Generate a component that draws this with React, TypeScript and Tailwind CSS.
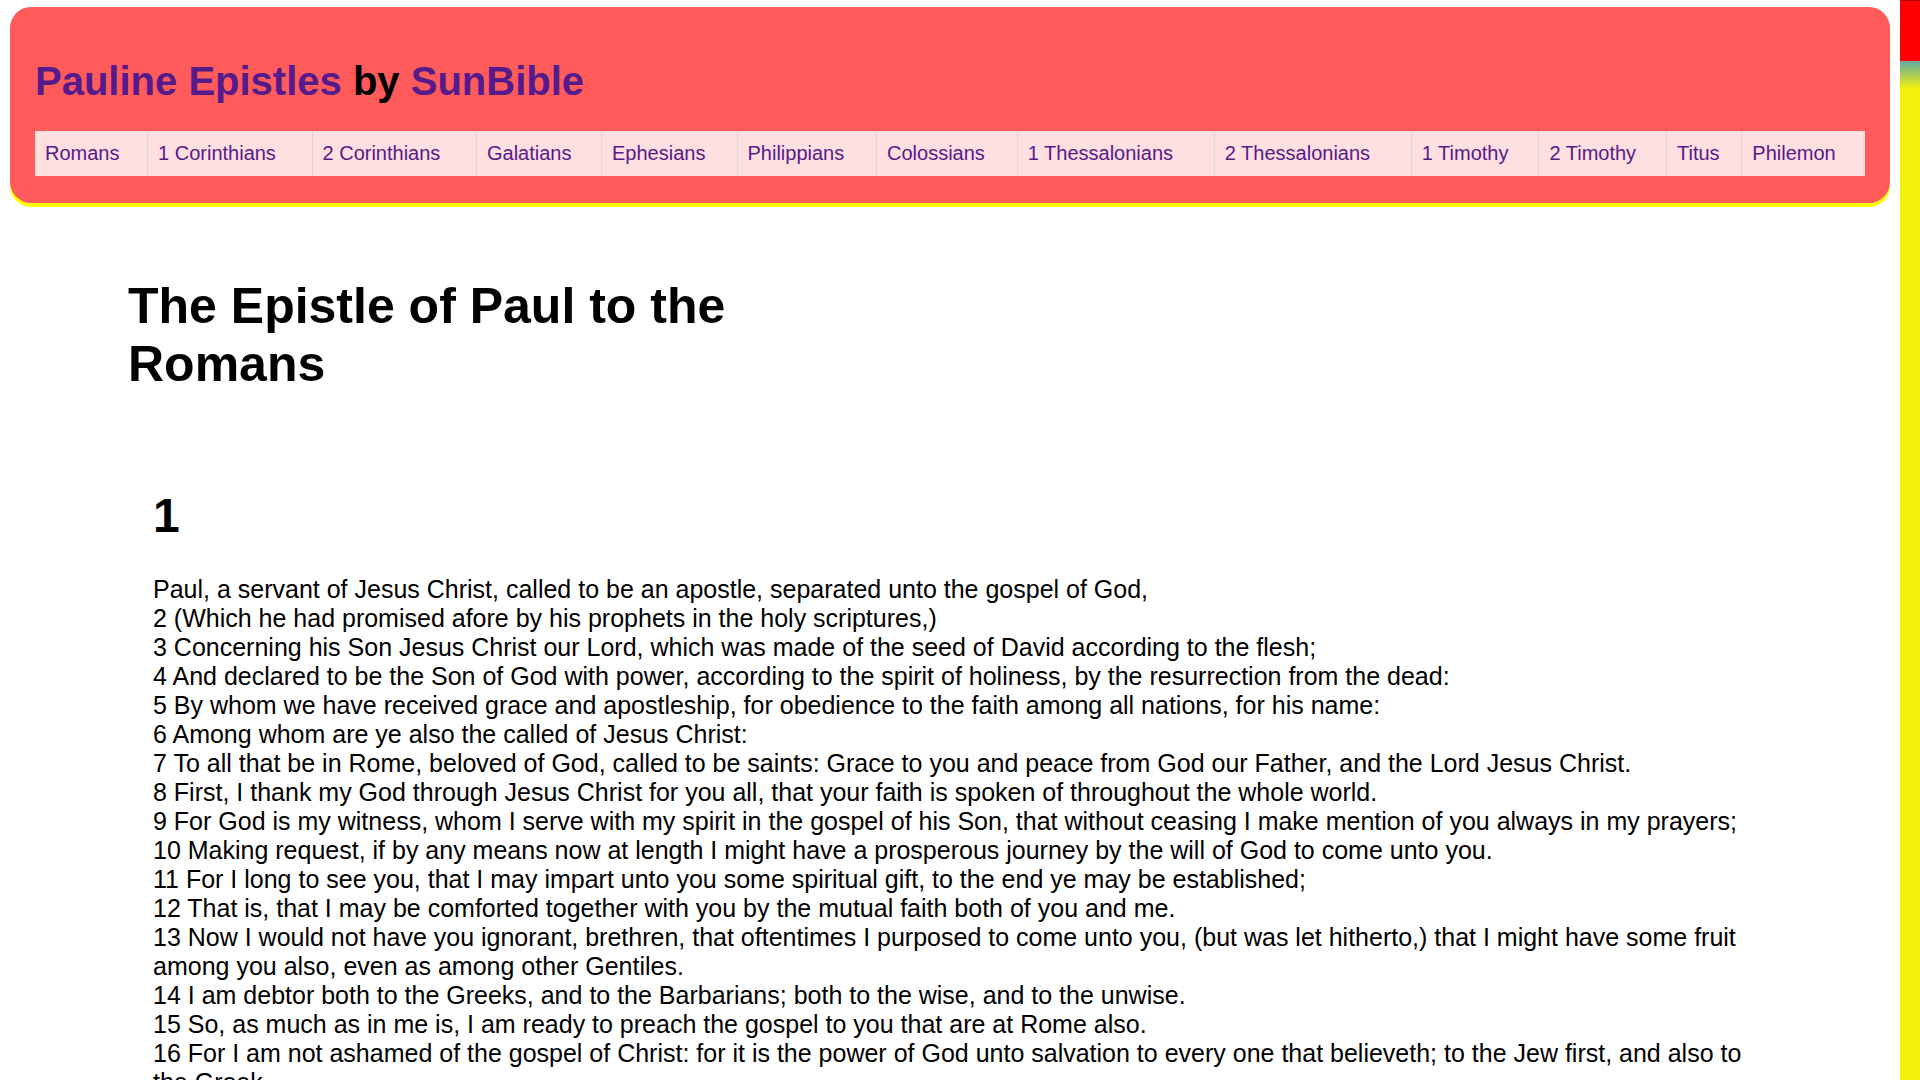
import React from "react";

const books = [
  "Romans",
  "1 Corinthians",
  "2 Corinthians",
  "Galatians",
  "Ephesians",
  "Philippians",
  "Colossians",
  "1 Thessalonians",
  "2 Thessalonians",
  "1 Timothy",
  "2 Timothy",
  "Titus",
  "Philemon",
];

const verses = [
  "Paul, a servant of Jesus Christ, called to be an apostle, separated unto the gospel of God,",
  "2 (Which he had promised afore by his prophets in the holy scriptures,)",
  "3 Concerning his Son Jesus Christ our Lord, which was made of the seed of David according to the flesh;",
  "4 And declared to be the Son of God with power, according to the spirit of holiness, by the resurrection from the dead:",
  "5 By whom we have received grace and apostleship, for obedience to the faith among all nations, for his name:",
  "6 Among whom are ye also the called of Jesus Christ:",
  "7 To all that be in Rome, beloved of God, called to be saints: Grace to you and peace from God our Father, and the Lord Jesus Christ.",
  "8 First, I thank my God through Jesus Christ for you all, that your faith is spoken of throughout the whole world.",
  "9 For God is my witness, whom I serve with my spirit in the gospel of his Son, that without ceasing I make mention of you always in my prayers;",
  "10 Making request, if by any means now at length I might have a prosperous journey by the will of God to come unto you.",
  "11 For I long to see you, that I may impart unto you some spiritual gift, to the end ye may be established;",
  "12 That is, that I may be comforted together with you by the mutual faith both of you and me.",
  "13 Now I would not have you ignorant, brethren, that oftentimes I purposed to come unto you, (but was let hitherto,) that I might have some fruit among you also, even as among other Gentiles.",
  "14 I am debtor both to the Greeks, and to the Barbarians; both to the wise, and to the unwise.",
  "15 So, as much as in me is, I am ready to preach the gospel to you that are at Rome also.",
  "16 For I am not ashamed of the gospel of Christ: for it is the power of God unto salvation to every one that believeth; to the Jew first, and also to the Greek.",
  "17 For therein is the righteousness of God revealed from faith to faith: as it is written, The just shall live by faith.",
  "18 For the wrath of God is revealed from heaven against all ungodliness and unrighteousness of men, who hold the truth in unrighteousness;",
  "19 Because that which may be known of God is manifest in them; for God hath shewed it unto them.",
  "20 For the invisible things of him from the creation of the world are clearly seen, being understood by the things that are made, even his eternal power and Godhead; so that they are without excuse:",
];

export default function App() {
  return (
    <div className="flex h-screen overflow-hidden bg-white font-['Liberation_Sans',Arial,sans-serif] text-black">
      <div className="min-w-0 flex-1 overflow-hidden pt-[7px]">
        <header className="mx-[10px] rounded-[21px] bg-[#ff5b5b] pl-[25px] pr-[25px] pt-[51px] pb-[27px] shadow-[0_4px_0_#ffff00]">
          <h1 className="m-0 text-[40px] font-bold leading-[46px]">
            <a href="#" className="text-[#551a8b] no-underline">
              Pauline Epistles
            </a>{" "}
            by{" "}
            <a href="#" className="text-[#551a8b] no-underline">
              SunBible
            </a>
          </h1>
          <nav className="mt-[27px]">
            <table className="w-full border-collapse bg-[#ffdfdf]">
              <tbody>
                <tr>
                  {books.map((b, i) => (
                    <td
                      key={b}
                      className={
                        i === 0
                          ? "whitespace-nowrap px-[10px] py-[11px] text-[20px] leading-[23px]"
                          : "whitespace-nowrap border-l border-[#d9d9d9] px-[10px] py-[11px] text-[20px] leading-[23px]"
                      }
                    >
                      <a href="#" className="text-[#551a8b] no-underline">
                        {b}
                      </a>
                    </td>
                  ))}
                </tr>
              </tbody>
            </table>
          </nav>
        </header>

        <main className="pl-[128px] pr-[127px] pt-[75px]">
          <h1 className="m-0 max-w-[660px] text-[50px] font-bold leading-[57.5px]">
            The Epistle of Paul to the Romans
          </h1>
          <article className="pl-[25px] pr-[26px] pt-[95px]">
            <h2 className="m-0 text-[48px] font-bold leading-[55px]">1</h2>
            <div className="pt-[32px] text-[25px] leading-[29px]">
              {verses.map((v, i) => (
                <div key={i}>{v}</div>
              ))}
            </div>
          </article>
        </main>
      </div>

      <div className="flex h-screen w-[20px] shrink-0 flex-col bg-[#f5f00a]">
        <div className="h-[61px] w-full border-t border-[#b00000] bg-[#ff0000]" />
        <div className="h-[28px] w-full bg-[linear-gradient(to_bottom,#5fa9a3,#f5f00a)]" />
        <div className="flex-1" />
      </div>
    </div>
  );
}
